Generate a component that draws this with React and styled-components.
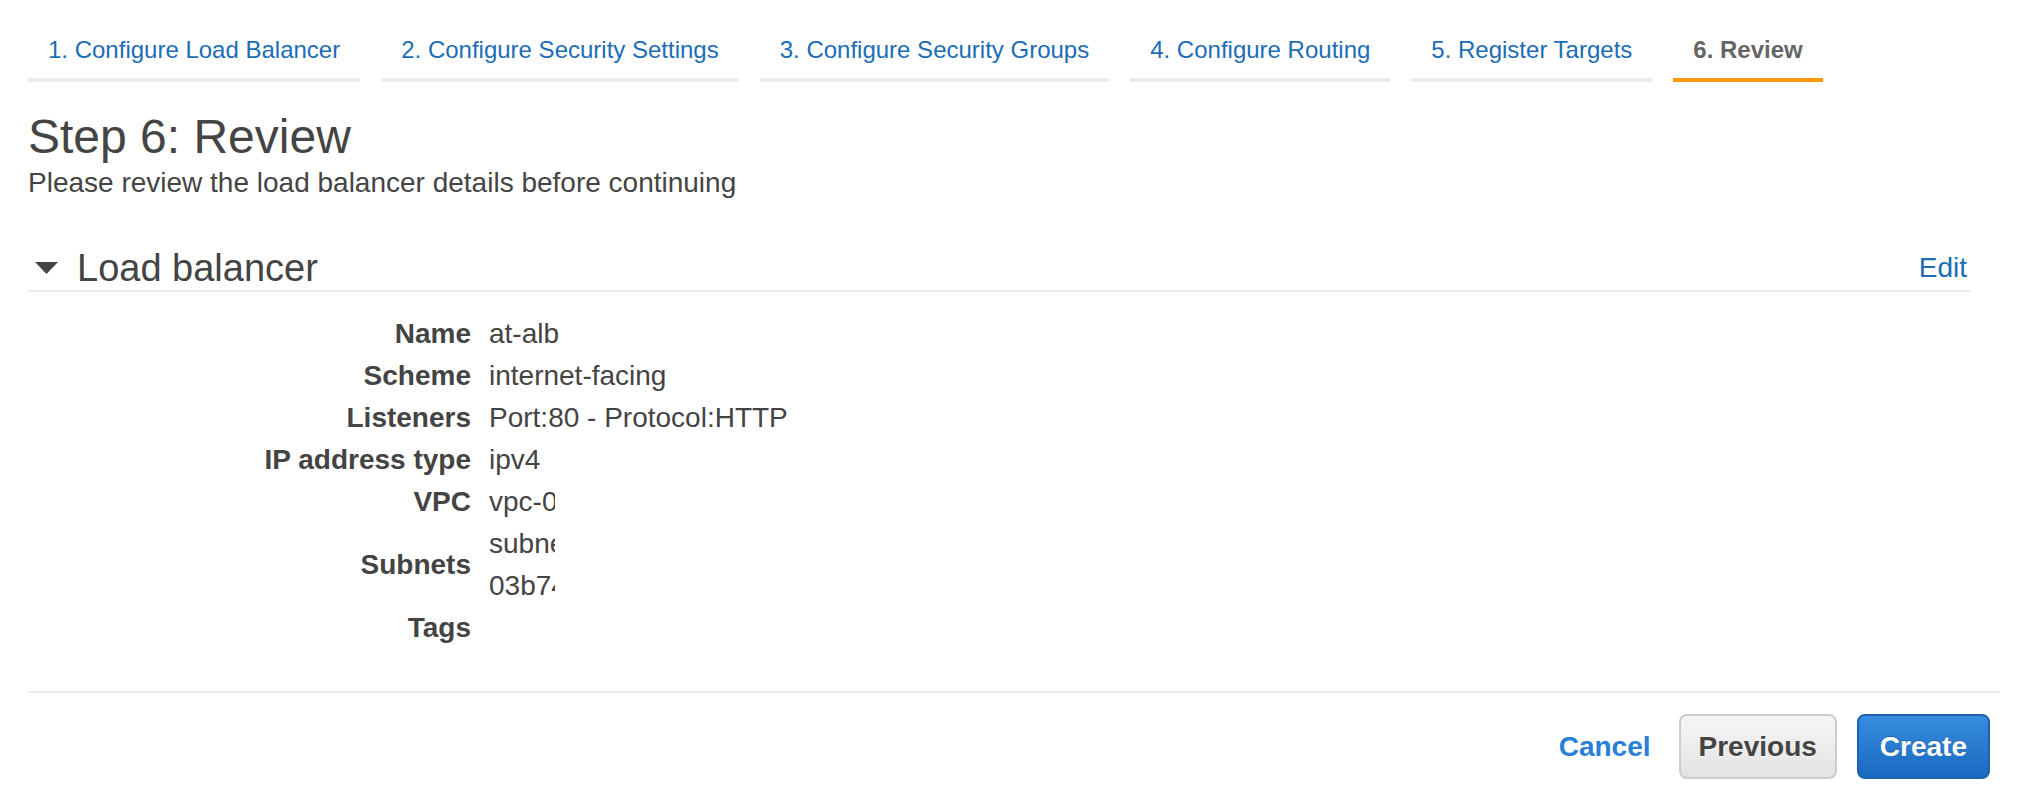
import React from "react";
import styled, { createGlobalStyle } from "styled-components";

const GlobalStyle = createGlobalStyle`
  html, body {
    margin: 0;
    padding: 0;
    background: #ffffff;
  }
  body {
    font-family: "Liberation Sans", Arial, Helvetica, sans-serif;
    color: #444444;
  }
`;

const Page = styled.div`
  padding: 35px 22px 0 28px;
`;

const TabList = styled.nav`
  display: flex;
  gap: 21px;
`;

const Tab = styled.a`
  display: block;
  padding: 0 20px 13px;
  font-size: 24px;
  line-height: 30px;
  white-space: nowrap;
  text-decoration: none;
  color: ${(p) => (p.$active ? "#666666" : "#1c6db5")};
  font-weight: ${(p) => (p.$active ? 700 : 400)};
  border-bottom: 4px solid ${(p) => (p.$active ? "#ff9900" : "#eaeded")};
`;

const Title = styled.h1`
  margin: 27px 0 0;
  font-size: 48px;
  line-height: 56px;
  font-weight: 400;
  color: #444444;
`;

const Subtitle = styled.p`
  margin: 2px 0 0;
  font-size: 28px;
  line-height: 32px;
  color: #444444;
`;

const Section = styled.section`
  margin: 47px 29px 0 0;
`;

const SectionHeader = styled.div`
  display: flex;
  align-items: center;
  justify-content: space-between;
  height: 44px;
  border-bottom: 2px solid #eaeded;
  padding-right: 4px;
`;

const SectionTitle = styled.h2`
  display: flex;
  align-items: center;
  gap: 19px;
  margin: 0;
  padding-left: 7px;
  font-size: 38px;
  line-height: 44px;
  font-weight: 400;
  color: #444444;
`;

const Caret = styled.svg`
  width: 23px;
  height: 12px;
  display: block;
`;

const EditLink = styled.a`
  font-size: 28px;
  line-height: 44px;
  color: #1c6db5;
  text-decoration: none;
`;

const Details = styled.dl`
  display: grid;
  grid-template-columns: 443px 1fr;
  column-gap: 18px;
  margin: 0;
  padding: 21px 0 42px;
`;

const Label = styled.dt`
  display: flex;
  align-items: center;
  justify-content: flex-end;
  font-size: 28px;
  line-height: 42px;
  font-weight: 700;
  color: #444444;
`;

const Value = styled.dd`
  margin: 0;
  font-size: 28px;
  line-height: 42px;
  min-height: 42px;
  color: #444444;
`;

const Clipped = styled.span`
  display: block;
  width: 66px;
  overflow: hidden;
  white-space: nowrap;
`;

const Footer = styled.div`
  display: flex;
  align-items: center;
  justify-content: flex-end;
  gap: 20px;
  border-top: 2px solid #eaeded;
  padding: 21px 10px 0 0;
`;

const CancelLink = styled.a`
  margin-right: 8px;
  font-size: 28px;
  font-weight: 700;
  color: #2a7fd6;
  text-decoration: none;
`;

const Button = styled.button`
  height: 65px;
  padding: 0 ${(p) => (p.$primary ? 21 : 18)}px;
  border-radius: 8px;
  font-family: inherit;
  font-size: 28px;
  font-weight: 700;
  cursor: pointer;
  border: 2px solid ${(p) => (p.$primary ? "#1e62b0" : "#cccccc")};
  color: ${(p) => (p.$primary ? "#ffffff" : "#444444")};
  background: ${(p) =>
    p.$primary
      ? "linear-gradient(to bottom, #378ddf, #1a69c0)"
      : "linear-gradient(to bottom, #f6f6f6, #e3e3e3)"};
  text-shadow: ${(p) =>
    p.$primary ? "0 -1px 0 rgba(0,0,0,0.25)" : "0 1px 0 rgba(255,255,255,0.8)"};
`;

const tabs = [
  "1. Configure Load Balancer",
  "2. Configure Security Settings",
  "3. Configure Security Groups",
  "4. Configure Routing",
  "5. Register Targets",
  "6. Review",
];

export default function App() {
  return (
    <>
      <GlobalStyle />
      <Page>
        <TabList>
          {tabs.map((t, i) => (
            <Tab key={t} $active={i === tabs.length - 1}>
              {t}
            </Tab>
          ))}
        </TabList>
        <Title>Step 6: Review</Title>
        <Subtitle>Please review the load balancer details before continuing</Subtitle>
        <Section>
          <SectionHeader>
            <SectionTitle>
              <Caret viewBox="0 0 23 12">
                <polygon points="0,0 23,0 11.5,12" fill="#444444" />
              </Caret>
              Load balancer
            </SectionTitle>
            <EditLink>Edit</EditLink>
          </SectionHeader>
          <Details>
            <Label>Name</Label>
            <Value>at-alb</Value>
            <Label>Scheme</Label>
            <Value>internet-facing</Value>
            <Label>Listeners</Label>
            <Value>Port:80 - Protocol:HTTP</Value>
            <Label>IP address type</Label>
            <Value>ipv4</Value>
            <Label>VPC</Label>
            <Value>
              <Clipped>vpc-0</Clipped>
            </Value>
            <Label>Subnets</Label>
            <Value>
              <Clipped>subnet</Clipped>
              <Clipped>03b74</Clipped>
            </Value>
            <Label>Tags</Label>
            <Value />
          </Details>
        </Section>
        <Footer>
          <CancelLink>Cancel</CancelLink>
          <Button>Previous</Button>
          <Button $primary>Create</Button>
        </Footer>
      </Page>
    </>
  );
}
